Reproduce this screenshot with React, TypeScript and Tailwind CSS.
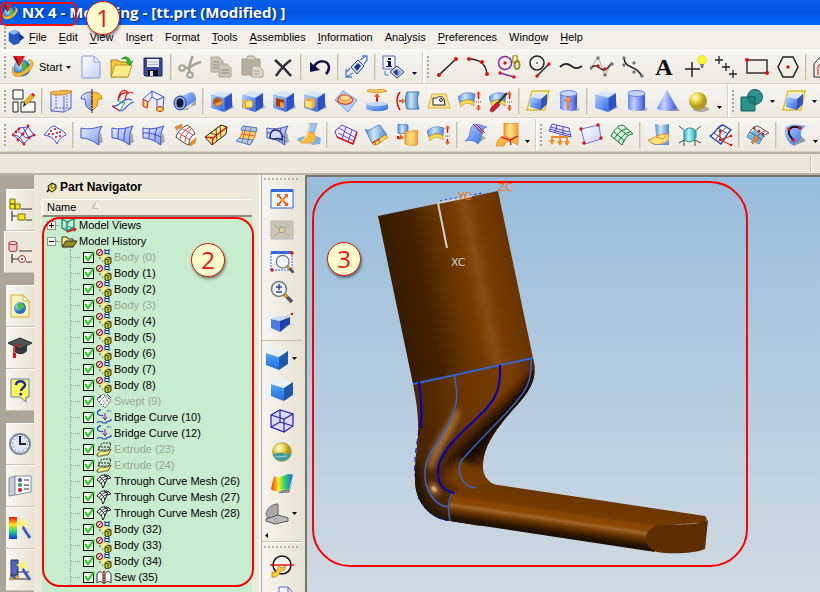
import type { ReactNode } from 'react';

const RED = '#e01010';

function Dots({ at, r = 1.7, fill = RED }: { at: number[][]; r?: number; fill?: string }) {
  return (
    <>
      {at.map(([x, y]) => (
        <circle key={`${x}-${y}`} cx={x} cy={y} r={r} fill={fill} />
      ))}
    </>
  );
}

function Cube() {
  return (
    <>
      <path d="M13 23 24 19 22 12z" fill="#b5b2a6" />
      <path d="M1 6 14 9v14L1 19z" fill="url(#blueFace)" />
      <path d="M1 6 9 2l13 2-8 5z" fill="#d6e6fc" />
      <path d="M14 9 22 4v14l-8 5z" fill="#2a52c4" />
      <path d="M1 6 14 9v14M14 9l8-5" fill="none" stroke="#7ba4f0" strokeWidth=".7" />
    </>
  );
}

function DatumCube() {
  return (
    <>
      <path d="M6 2h17l-4 19H1z" fill="#fdf3b8" stroke="#e2bb35" strokeWidth="1.500" />
      <path d="M4 8l11 2v11L4 18z" fill="url(#blueFace)" />
      <path d="M4 8l6-4 11 1-6 5z" fill="#d5e4fa" />
      <path d="M15 10l6-5v10l-6 6z" fill="#3555b8" />
    </>
  );
}

function Cylinder() {
  return (
    <>
      <path d="M6 22h15l2-3z" fill="#aaa" />
      <path d="M3 4v15c0 4 17 4 17 0V4z" fill="url(#blueRound)" />
      <ellipse cx="11.500" cy="4.500" rx="8.500" ry="3" fill="#c5d3ff" stroke="#6a7cf0" />
    </>
  );
}

function Thicken() {
  return (
    <>
      <path d="M0 8c6-5 11-5 17-3l-1 8C11 9 7 10 2 14z" fill="url(#steel)" stroke="#4775c8" strokeWidth=".7" />
      <path d="M2 14c5-4 9-4 14-1v4c-5-4-9-4-13 1z" fill="#ffe04a" stroke="#c98a1a" strokeWidth=".7" />
      <path d="M20.500 10V4m0 17v-5" stroke={RED} strokeWidth="1.500" />
      <path d="M18 5.500 20.500 2 23 5.500zM18 18.500l2.500 3.500 2.500-3.500z" fill="#f05a20" />
      <path d="M18 13h5" stroke="#a33" strokeDasharray="1 1" />
    </>
  );
}

function CurvedSheet({ lines, cross }: { lines?: boolean; cross?: boolean }) {
  return (
    <>
      <path d="M16 22 23 19l-2-10z" fill="#aaa9a0" />
      <path d="M1 5c7 2 15 0 21-2-3 5-4 11-3 19C13 18 7 15 1 15z" fill="url(#sheet)" stroke="#4554c8" />
      {lines && <path d="M8 5c-1 4-1 7-1 11M15 5c-2 5-2 9-2 13" fill="none" stroke="#4048e0" />}
      {cross && <path d="M1 10c7-1 13 2 18 4" fill="none" stroke="#4048e0" />}
    </>
  );
}

function Magnifier() {
  return (
    <>
      <path d="m14 14 8 8" stroke="#555" strokeWidth="3.500" />
      <path d="m14 14 3 3" stroke="#f0a020" strokeWidth="3" />
      <circle cx="9" cy="9" r="7.500" fill="#eef3ff" fillOpacity=".85" stroke="#777" strokeWidth="1.500" />
    </>
  );
}

const art: Record<string, ReactNode> = {
  nx: (
    <>
      <circle cx="11" cy="13" r="8.500" fill="url(#globe)" />
      <path d="M11 6c3 2 6 3 6 8 0 3-2 5-4 6-2-4-3-8-2-14z" fill="#49b649" />
      <path d="M2 12c-3 8 3 12 10 8 7-3 11-9 10-13-1-2-3-2-5-2 3 1 3 3 1 6-3 4-8 7-12 7-3 0-4-3-4-6z" fill="#f3bb2b" stroke="#b87c10" strokeWidth=".5" />
      <path d="M2 1h12L8 12z" fill="#dd2222" />
      <path d="M2 1l6 11-2-9z" fill="#881010" />
    </>
  ),
  'new file': (
    <>
      <path d="M3 1h12l6 6v16H3z" fill="url(#paper)" stroke="#8a9ad8" />
      <path d="M15 1v6h6z" fill="#fff" stroke="#8a9ad8" />
    </>
  ),
  open: (
    <>
      <path d="M1 5h7l2 2h8v15H1z" fill="#f0c838" stroke="#a8861a" />
      <path d="M1 22 5 10h17l-4 12z" fill="#fdeb86" stroke="#b8922a" />
      <path d="M11 4c4-4 9-2 10 3l2-1-3 5-4-4h2c-1-3-4-4-7-3z" fill="#2db82d" stroke="#168016" strokeWidth=".5" />
    </>
  ),
  save: (
    <>
      <path d="M3 3h18v18H4l-1-1z" fill="#3a4f9c" stroke="#18245c" />
      <path d="M6 4h12v8H6z" fill="#eef2fb" />
      <path d="M7 7h10M7 9.500h10" stroke="#a8b4d0" />
      <path d="M7 15h10v6H7z" fill="#111" />
      <path d="M9 16h3v5H9z" fill="#dde" />
    </>
  ),
  cut: (
    <g fill="none" stroke="#a5a294" strokeWidth="2">
      <circle cx="4" cy="13" r="2.800" />
      <circle cx="12" cy="20" r="2.800" />
      <path d="M7 13c5 1 9-5 16-6M11 17c1-5 0-10 4-16" strokeWidth="2.500" />
    </g>
  ),
  copy: (
    <g fill="#c9c6b8" stroke="#aaa795">
      <path d="M2 2h8l4 4v11H2z" />
      <path d="M10 9h8l4 4v9H10z" />
      <path d="M4 7h6M4 10h5M4 13h5M12 15h8M12 18h8" stroke="#8f8c7c" />
    </g>
  ),
  paste: (
    <g stroke="#a5a28f">
      <path d="M2 4h18v16H2z" fill="#b4b09c" />
      <path d="M8 1h6l2 4H6z" fill="#d4d1c4" />
      <path d="M12 11h7l4 4v7H12z" fill="#dad8cc" />
      <path d="M14 16h6M14 19h6" />
    </g>
  ),
  delete: <path d="M4 5c6 5 11 10 16 16M20 5C14 9 9 15 5 21" fill="none" stroke="#2c2c34" strokeWidth="2.500" />,
  undo: (
    <>
      <path d="M6 12C10 4 20 5 21 12c0 3-1 5-3 7" fill="none" stroke="#11114a" strokeWidth="2.500" />
      <path d="M2 7v10l10-2z" fill="#11114a" />
    </>
  ),
  repeat: (
    <>
      <path d="m6 12 7-7 6 6-7 8z" fill="#dfe8fb" stroke="#24348c" />
      <path d="m9 12 4-4 3 3-4 5z" fill="#24348c" />
      <path d="M15 5l6-4M17 1h5v5M19 9l3-4M1 14v8h6M1 22l7-4M5 13l-3 4" fill="none" stroke="#4b84d8" strokeWidth="1.300" />
    </>
  ),
  information: (
    <>
      <path d="M1 1h12v13H1z" fill="#f5f6ff" stroke="#5560c0" />
      <path d="M6 3h3v2H6zM5 6h4v5h1v1H4v-1h2V7H5z" fill="#111160" />
      <path d="m8 17 7-6 7 6-7 6z" fill="#dfe8fb" stroke="#24348c" />
      <path d="m11 17 4-3 4 3-4 4z" fill="#24348c" />
      <path d="m15 14 1 7 3-4z" fill="#7ba4e8" />
      <path d="M3 16v4h4" fill="none" stroke="#4b84d8" />
    </>
  ),
  line: (
    <>
      <path d="M4 20 21 4" stroke="#222" strokeWidth="1.500" />
      <Dots at={[[4, 20], [21, 4]]} r={2} />
    </>
  ),
  arc: (
    <>
      <path d="M3 4c10 0 17 5 18 15" fill="none" stroke="#222" strokeWidth="1.500" />
      <Dots at={[[3, 4], [16, 7], [21, 19]]} r={2} />
    </>
  ),
  'lines and arcs': (
    <>
      <circle cx="8" cy="8" r="6.500" fill="none" stroke="#8030b0" strokeWidth="1.500" />
      <path d="M3 18 17 22" stroke="#8030b0" strokeWidth="1.500" />
      <Dots at={[[8, 8], [3, 18], [17, 22]]} />
      <ellipse cx="18" cy="4" rx="2.500" ry="4" fill="none" stroke="#b4a624" strokeWidth="1.800" />
      <ellipse cx="20" cy="10" rx="2.500" ry="4" fill="none" stroke="#988b18" strokeWidth="1.800" />
    </>
  ),
  circle: (
    <>
      <circle cx="9" cy="8" r="7" fill="none" stroke="#222" strokeWidth="1.500" />
      <path d="m9 21 12-12" stroke="#222" strokeWidth="1.500" />
      <circle cx="9" cy="8" r=".8" />
      <Dots at={[[9, 21], [21, 9]]} />
    </>
  ),
  curve: <path d="M1 12c5-5 9-3 13 0 3 2 6 1 9-1" fill="none" stroke="#222" strokeWidth="1.800" />,
  spline: (
    <>
      <path d="M1 13 8 2l7 18 7-12" fill="none" stroke="#aaa" />
      <path d="M1 13c6-6 8 2 13 2 4 0 5-5 8-7" fill="none" stroke="#222" strokeWidth="1.300" />
      <Dots at={[[1, 13], [8, 3], [15, 20], [22, 9]]} fill="#777" />
      <Dots at={[[8, 11], [15, 14]]} />
    </>
  ),
  'fit spline': (
    <>
      <path d="M3 3c1 12 13 6 18 19" fill="none" stroke="#222" strokeWidth="1.500" />
      <Dots at={[[3, 3], [3, 10], [13, 8], [13, 17], [21, 21]]} fill="#777" />
    </>
  ),
  text: (
    <text x="12" y="20" textAnchor="middle" fontFamily="Liberation Serif, serif" fontWeight="bold" fontSize="24">
      A
    </text>
  ),
  point: (
    <>
      <path d="M9 7v15M2 14h15" stroke="#222" strokeWidth="1.500" />
      <circle cx="19" cy="5" r="4.500" fill="#fdf435" stroke="#d8cc20" strokeWidth=".5" />
      <path d="M17 9h4l-1 4h-2z" fill="#777" />
    </>
  ),
  'point set': <path d="M5 1v8M1 5h8M12 8v8M8 12h8M19 15v8M15 19h8" stroke="#222" strokeWidth="1.300" />,
  rectangle: (
    <>
      <path d="M2 5h20v13H2z" fill="none" stroke="#333" strokeWidth="1.500" />
      <Dots at={[[2, 5], [22, 18]]} r={2} />
    </>
  ),
  polygon: (
    <>
      <path d="M7 2h10l5 10-5 10H7L2 12z" fill="none" stroke="#222" strokeWidth="1.500" />
      <Dots at={[[12, 12]]} />
    </>
  ),
  offset: (
    <>
      <path d="M1 22V9l6-7 9 3v17z" fill="none" stroke="#222" />
      <path d="M5 20V11l5-5 6 3" fill="none" stroke={RED} />
    </>
  ),
  sketch: (
    <>
      <path d="M1 1h10v9H1zM1 13h5v10H1zM9 13h14v10H9z" fill="#fbfbf8" stroke="#222" />
      <path d="m12 13 2 3 8-8-3-3z" fill="#f0b420" stroke="#8c6410" strokeWidth=".5" />
      <path d="m11 18 1-5 2 3z" fill="#222" />
      <path d="m19 5 3 3 1-2-2-2z" fill={RED} />
    </>
  ),
  extrude: (
    <>
      <path d="M2 5v17l13 1V7M22 3v16l-7 4" fill="#e5e9ff" stroke="#5560e0" />
      <path d="M7 5v14M18 6v13M2 22l5-3h15" fill="none" stroke="#5560e0" strokeDasharray="2 1" />
      <path d="M1 4c5-3 6-1 10-2s8 0 12 0c-3 3-8 4-12 4S4 6 1 4z" fill="#f4bc58" stroke="#d08018" />
    </>
  ),
  revolve: (
    <>
      <path d="M12 3C5 3 1 6 1 10h4l1 7 4 4h2z" fill="url(#sheet)" stroke="#3a62d0" />
      <path d="M12 3c6 0 10 3 10 7h-4l-1 7-4 4h-1z" fill="#fbc02d" stroke="#d87f10" />
      <path d="M12 0v24" stroke="#222" strokeDasharray="6 1 2 1" />
    </>
  ),
  sweep: (
    <g fill="none">
      <path d="M7 12C8 1 14-1 17 4c-6-1-8 1-10 8zM14 11c1-7 4-9 8-7" stroke={RED} strokeWidth="1.200" />
      <path d="M1 17c8 2 11-10 20-6M1 17l8 5c6 0 7-8 14-9" stroke="#3a62d0" strokeWidth="1.200" />
      <path d="m7 12 7 2M9 22l5-9" stroke="#20b0a0" />
      <path d="M1 17l8 5" stroke={RED} />
    </g>
  ),
  'sweep along guide': (
    <>
      <path d="M1 10 10 2l12 6-1 11-6 1V11l-5-3-4 5" fill="#eef0ff" stroke="#4554e0" />
      <path d="M10 2v6M15 11l7-3" stroke="#4554e0" />
      <path d="M1 10l5 3-1 6-4-2z" fill="#ffd680" stroke={RED} />
      <ellipse cx="18" cy="20" rx="3.500" ry="2.500" fill="#ffe14a" stroke={RED} />
    </>
  ),
  tube: (
    <>
      <path d="M8 21 23 16V9l-8 12z" fill="#aaa89c" />
      <path d="M6 8 18 3c3 0 5 3 5 8L9 21z" fill="url(#blueFace)" />
      <ellipse cx="7" cy="14" rx="6" ry="7" fill="#95a8dc" stroke="#28408c" />
      <ellipse cx="7" cy="14" rx="3.500" ry="4.500" fill="#101838" />
    </>
  ),
  hole: (
    <>
      <Cube />
      <circle cx="7.500" cy="13" r="4.500" fill="#b3561a" />
      <path d="M4 15a4.500 4.500 0 0 0 8-3z" fill="#ff9c34" />
    </>
  ),
  boss: (
    <>
      <Cube />
      <path d="M2 11h6v8H2z" fill="#ffb435" />
      <circle cx="8" cy="15" r="4" fill="#ffe680" stroke="#e08c18" />
    </>
  ),
  pocket: (
    <>
      <Cube />
      <path d="M4 9l8 2v8l-8-2z" fill="#ff9a35" />
      <path d="M4 9l8 2v3l-4-1v5l-4-1z" fill="#a83c10" />
    </>
  ),
  pad: (
    <>
      <Cube />
      <path d="M2 11l7 1v8l-7-2z" fill="#ffe680" stroke="#d8881c" strokeWidth=".7" />
      <path d="M9 12l3-2v7l-3 3zM2 11l3-2 7 1-3 2z" fill="#ffab30" />
    </>
  ),
  emboss: (
    <>
      <path d="M1 11 9 2l14 9-9 12z" fill="#b6d3f6" stroke="#6c9fe0" />
      <path d="M4 13c-1-6 5-9 10-6 5 2 6 4 4 6-4 3-9 3-14 0z" fill="#ffc468" stroke={RED} />
      <ellipse cx="11" cy="9" rx="5" ry="2.500" fill="#ffe39a" stroke="#e88a20" />
    </>
  ),
  'offset emboss': (
    <>
      <path d="M2 2c4-3 6 0 10-1s7-1 10 1c-5 2-16 2-20 0z" fill="#ffd26e" stroke="#e0901c" />
      <path d="M12 14V6" stroke={RED} strokeWidth="2" />
      <path d="m9 8 3-4 3 4z" fill="#f05a20" />
      <path d="M1 15c6-3 16-3 22 0v5c-6 3-16 3-22 0z" fill="url(#blueFace)" />
      <path d="M1 15c6-3 16-3 22 0-6 3-16 3-22 0z" fill="#c5dbfa" />
    </>
  ),
  'face cut': (
    <>
      <path d="M4 3C0 8 0 15 4 21" fill="none" stroke={RED} strokeWidth="1.500" />
      <path d="M3 12h7" stroke={RED} strokeWidth="1.500" />
      <path d="m6 9 4 3-4 3z" fill="#f08020" />
      <path d="M11 3h12c-2 5-2 12 0 17H11c-2-5-2-12 0-17z" fill="url(#steel)" stroke="#3c7cae" />
    </>
  ),
  'user defined': (
    <>
      <path d="M5 5h14l4 14H1z" fill="#ffe793" stroke="#e0b030" />
      <path d="M6 16V9h4c1-2 6-2 7 1l1 6z" fill="#fff" stroke="#222" />
      <circle cx="14" cy="11" r="1.500" fill="none" stroke="#222" />
    </>
  ),
  thicken: <Thicken />,
  'sheets to solid': (
    <>
      <Thicken />
      <path d="M2 19 8 13l3 3-6 6c-3 2-5 0-3-3z" fill="#d41838" stroke="#80102c" strokeWidth=".6" />
      <path d="m9 14 9-10" stroke="#333" strokeWidth="2" />
    </>
  ),
  'datum plane': <DatumCube />,
  'datum axis': (
    <>
      <Cylinder />
      <path d="M10 20v-8H7l4-5 4 5h-3v8z" fill="#f29468" stroke="#b85420" strokeWidth=".6" />
    </>
  ),
  block: <Cube />,
  cylinder: <Cylinder />,
  cone: (
    <>
      <path d="M10 22h14l-8-9z" fill="#999" />
      <path d="M11 1 1 19c2 4 17 4 20 0z" fill="url(#blueRound)" />
    </>
  ),
  sphere: (
    <>
      <ellipse cx="14" cy="20" rx="8" ry="3" fill="#aaa89c" />
      <circle cx="11" cy="12" r="9" fill="url(#yellowBall)" />
    </>
  ),
  unite: (
    <>
      <circle cx="15" cy="8" r="7.500" fill="#2d9090" stroke="#106060" />
      <path d="M1 8h14v14H1z" fill="#2a8f8d" stroke="#106060" />
      <path d="M8 8a7.500 7.500 0 0 0 7 7.500V8z" fill="#208080" stroke="#106060" strokeWidth=".7" />
    </>
  ),
  'through points': (
    <>
      <path d="M1 12 7 5l9-1 6 8-5 3-5 6z" fill="#f4f5ff" stroke="#4048e0" />
      <path d="m6 8 8 7 8-3M1 12c5 0 8 3 11 9M6 17l10-13M11 4l6 11" fill="none" stroke="#4048e0" />
      <Dots at={[[1, 12], [7, 6], [16, 3], [22, 12], [17, 15], [12, 21], [6, 17], [11, 11], [4, 9]]} r={1.4} />
    </>
  ),
  'from point cloud': (
    <>
      <path d="M1 12C6 6 8 3 12 3c4 4 8 3 11 9-5 2-7 4-9 9C11 15 7 13 1 12z" fill="#f4f5ff" stroke="#4048e0" />
      <Dots at={[[8, 8], [12, 6], [10, 11], [14, 10], [17, 9], [13, 14], [6, 11], [17, 13]]} r={1.1} />
    </>
  ),
  ruled: <CurvedSheet />,
  'through curves': <CurvedSheet lines />,
  'through curve mesh': <CurvedSheet lines cross />,
  swept: (
    <>
      <path d="M3 14C5 8 9 5 14 2c5 3 7 6 8 9-5 2-6 6-6 11-4-1-8-4-13-8z" fill="#fff" stroke="#444" />
      <path d="m6 10 11 7M10 6l10 6M12 19c0-6 3-9 6-13M7 16c1-6 5-9 10-12" fill="none" stroke="#e04040" />
      <path d="M2 4 9 1v3L4 7 3 6zM17 20l6-5-1 5-5 3z" fill="#f0902c" stroke="#b85c14" strokeWidth=".5" />
    </>
  ),
  'section body': (
    <>
      <path d="M1 14 17 2l6 2-1 7L8 22z" fill="#fde97c" stroke="#222" />
      <path d="M1 14l8 1L23 4M9 15l-1 7" fill="none" stroke={RED} strokeWidth="1.500" />
      <path d="m12 6 1 12M16 3l1 11M6 10l7 2" stroke="#222" strokeWidth=".8" />
    </>
  ),
  'bridge sheet': (
    <>
      <path d="M8 3 22 5l-2 8-4 8-14-3 5-7z" fill="#ffd264" stroke="#e07820" />
      <path d="M8 3 22 5l-1 4L6 7zM4 15l14 2-3 5-14-4z" fill="#a9ccf4" stroke="#4480d0" />
      <path d="m11 4-4 15M16 5l-4 16M6 11l14 2" stroke="#e04020" strokeWidth=".8" />
    </>
  ),
  'n-sided surface': (
    <>
      <CurvedSheet lines cross />
      <path d="M4 15c0-4 1-8 5-8 5 0 8 3 7 10-4-4-8 1-12-2z" fill="#cdd9ff" stroke="#223060" strokeWidth="1.500" />
    </>
  ),
  transition: (
    <>
      <path d="M13 0h7l-3 10-6-1z" fill="#9dc4f4" stroke="#4b86d0" strokeWidth=".6" />
      <path d="M11 9l6 1c0 2 1 3 3 4l-3 6H4l-3-3c6 0 9-3 10-8z" fill="#fbb93a" stroke="#de8820" strokeWidth=".7" />
      <path d="M1 15l7-2-3 5H0zM19 13l5 2-1 6-8 1-1-2 3-1z" fill="#7fb0ea" />
      <path d="M13 1l-2 9c-1 4-3 6-6 7" fill="none" stroke="#ffe9a0" />
    </>
  ),
  'law extension': (
    <>
      <path d="M1 8 8 2l15 7-4 12L3 14z" fill="#f2f0ff" stroke="#5040d8" />
      <path d="m5 5 15 9M4 10l16 8M12 4l-4 12M18 7l-4 12" stroke="#6048e0" />
      <path d="m3 14 16 7 4-12" fill="none" stroke={RED} strokeWidth="1.500" />
    </>
  ),
  extension: (
    <>
      <path d="M0 6c5 4 8-3 15-4l7 10c-5 1-9 4-15 8z" fill="url(#steel)" stroke="#3a6cd0" strokeWidth=".8" />
      <path d="m7 20 14-8 2 3c-4 0-8 7-14 7z" fill="#ffe268" stroke="#e58b18" />
      <path d="m9 18 2 4M13 16l2 4M7 20l8-4" stroke={RED} strokeWidth=".8" />
    </>
  ),
  enlarge: (
    <>
      <path d="M2 1c4 2 7-1 10 1v9c-3-2-6 1-10-1z" fill="url(#steel)" stroke="#4480d0" strokeWidth=".8" />
      <path d="M9 8c4 2 9-2 13 0-2 4 1 10-1 14-4 0-8 1-12-1z" fill="url(#amber)" stroke="#e58b18" strokeWidth=".8" />
      <path d="M2 13v2h4" fill="none" stroke={RED} strokeWidth="2" />
      <path d="m4 11 4 4-5 2z" fill="#e85c18" />
    </>
  ),
  'offset surface': <Thicken />,
  trim: (
    <>
      <path d="M12 22 22 15l-5-3z" fill="#aaa89c" />
      <path d="M8 3c5-4 10 0 15 1-6 1-4 10-9 17-4-4-8-4-13-3 6-4 4-10 7-15z" fill="url(#blueFace)" stroke="#4480c8" strokeWidth=".7" />
      <path d="m9 1 10 10M12 1l9 9" stroke={RED} />
    </>
  ),
  'face blend': (
    <>
      <path d="M9 0h14v13l-5 3-9-3z" fill="url(#amber)" stroke="#e07818" strokeWidth=".7" />
      <path d="M1 23c1-5 4-9 8-10l7 4 7-4v9l-7-4c-4 0-6 1-7 5z" fill="#ffb83c" stroke="#e07818" strokeWidth=".7" />
      <path d="m6 14 9 3 8-4M15 17l1 5" fill="none" stroke={RED} strokeWidth="1.300" />
    </>
  ),
  'x-form': (
    <>
      <path d="M4 1l17 4 2 9L1 8z" fill="#f3f2ff" stroke="#5040d8" />
      <path d="M3 4l18 5M2 6l20 6M9 2 7 10M15 4l0 8" stroke="#5040d8" />
      <path d="M4 20v-6h15v6M12 12v9" fill="none" stroke="#f08c20" strokeWidth="1.800" />
      <path d="m1 17 3 5 3-5zM9 18l3 5 3-5zM16 18l3 5 3-5z" fill="#f08c20" />
    </>
  ),
  'i-form': (
    <>
      <path d="m2 6 18-4 2 14-16 5z" fill="url(#paper)" stroke="#7a70e8" />
      <Dots at={[[2, 6], [19, 2], [22, 15], [5, 20]]} />
    </>
  ),
  'match edge': (
    <>
      <path d="M1 13C4 7 8 2 13 2l10 9c-6 0-8 5-11 11z" fill="#d3f2d7" stroke="#187038" />
      <path d="m4 9 11 9M8 5l11 8M4 16C8 10 12 6 17 6M8 19c4-6 7-9 12-10" fill="none" stroke="#187038" />
    </>
  ),
  'styled blend': (
    <>
      <path d="M8 1c5 1 9 1 14 0v12H9z" fill="url(#steel)" />
      <path d="M1 17c6-1 7-6 21-6-1 6-2 8-6 9-5 3-10 2-15-3z" fill="#ffe27a" stroke="#f08820" />
      <path d="M1 18c5 3 9 4 14 3 3-1 6-2 7-5v6H8z" fill="#5f92e0" />
      <path d="M9 14l7 2 5-5" fill="none" stroke="#f08820" />
    </>
  ),
  'styled corner': (
    <>
      <path d="m1 3 6 5h10l6-5M6 23v-6M17 23v-6M1 20l5-3h11l6 3" fill="none" stroke="#444" />
      <path d="M6 8c4-4 8-4 12 0v6c-3 6-9 6-12 2z" fill="url(#teal)" stroke="#178c9c" />
    </>
  ),
  'styled sweep': (
    <>
      <path d="M1 13C6 11 8 3 14 2l8 5c-5 4-5 8-10 14z" fill="#f4f6ff" stroke="#2040c0" strokeWidth="1.300" />
      <path d="M5 10l10 7M9 5l10 6M7 16c4-5 6-9 11-12" fill="none" stroke="#555" />
      <path d="M11 8v9l11 5M11 17l11-4" fill="none" stroke={RED} />
      <Dots at={[[11, 17], [11, 8], [22, 22], [22, 13]]} r={1.3} />
    </>
  ),
  reflection: (
    <>
      <path d="M1 14C5 6 8 3 12 3l11 7c-5 1-7 5-10 11z" fill="#eef0f0" stroke="#555" />
      <path d="m1 14 7-7 9 6-4 8z" fill="#6dbce8" />
      <path d="m4 9 12 8M8 6l11 8M9 17c3-5 6-8 10-9" fill="none" stroke="#555" />
      <path d="m5 19 4-3-2-1 5-3v6l-2-1-3 4z" fill="#f28a30" stroke="#b84a10" strokeWidth=".5" />
      <Dots at={[[8, 5], [13, 8], [17, 11]]} r={1.3} />
    </>
  ),
  section: (
    <>
      <path d="M2 4c7-4 14-2 21-1-6 4-6 8-4 12l-8 8C3 19 1 11 2 4z" fill="url(#blueFace)" />
      <path d="m10 23 13-5-4-4z" fill="#999" />
      <path d="M17 5C7 1 1 9 11 17" fill="none" stroke="#111" strokeWidth="1.800" />
      <Dots at={[[17, 5], [6, 6], [10, 17]]} />
    </>
  ),
  fit: (
    <>
      <path d="M1 3h22v18H1z" fill="#f4f7ff" stroke="#3560c8" />
      <path d="M1 2h22v3H1z" fill="#3568d8" />
      <path d="m8 8 9 10M17 8 8 18" stroke="#d84410" strokeWidth="1.500" />
      <path d="M7 7h4l-4 4zM18 7v4l-4-4zM7 19v-4l4 4zM18 19h-4l4-4z" fill="#e86020" />
      <circle cx="12.500" cy="13" r="2" fill="#f8a020" />
    </>
  ),
  'fit selection': (
    <>
      <path d="M1 3h22v18H1z" fill="#c9c6b8" stroke="#b5b6bc" />
      <path d="m4 7 16 11M20 7 4 18" stroke="#b9a98f" />
      <circle cx="12" cy="12" r="3" fill="#d6cf9e" stroke="#a9a078" />
    </>
  ),
  zoom: (
    <>
      <path d="M1 3h21v18H1z" fill="#f4f7ff" stroke="#4060e0" strokeDasharray="2 1" />
      <path d="M1 2h21v3H1z" fill="#3568d8" />
      <g transform="translate(5 5) scale(.85)">
        <Magnifier />
      </g>
      <Dots at={[[2, 21], [22, 4]]} />
    </>
  ),
  'zoom in/out': (
    <>
      <Magnifier />
      <path d="M9 4v6M6 7h6M6 12h6" stroke="#3040a0" strokeWidth="1.500" />
    </>
  ),
  perspective: (
    <>
      <path d="m1 8 9 2v11l-9-4z" fill="#4c7ce8" />
      <path d="m1 8 8-3 11 1-10 4z" fill="#c8dcfa" />
      <path d="m10 10 10-4v7l-10 8z" fill="#2040b0" />
      <path d="m15 6 7-3M15 16l7-3" stroke="#999" strokeDasharray="1 1" />
      <Dots at={[[22, 3]]} r={1.2} />
    </>
  ),
  shaded: (
    <>
      <path d="M1 6 14 10v13L1 18z" fill="url(#shadeFace)" />
      <path d="M1 6 9 1l14 3-9 6z" fill="#e6f2ff" />
      <path d="M14 10 23 4v13l-9 6z" fill="#2058ac" />
    </>
  ),
  wireframe: (
    <g stroke="#2424a0" strokeWidth="1.200">
      <path d="M1 6 10 1l13 4v12l-9 6-13-5z" fill="#dcdcf8" />
      <path d="m1 6 13 4 9-5M14 10v13M10 1v12L1 18M10 13l13 4" fill="none" />
    </g>
  ),
  studio: (
    <>
      <circle cx="12" cy="12" r="9.500" fill="url(#yellowBall)" stroke="#8c8444" strokeWidth=".5" />
      <path d="M3 13c4 2 6-2 10 0s6 1 8-1c0 4-4 9-9 9s-8-3-9-8z" fill="#3f9ca0" />
      <path d="M5 16c4 2 7 0 12 0" fill="none" stroke="#a8dbe2" />
    </>
  ),
  'face analysis': (
    <>
      <path d="M8 21c4-1 8-4 11-2l4-9-4 12c-4-1-8 2-11-1z" fill="#888" />
      <path d="M4 5c6 5 12-5 19-1l-4 15c-6-3-11 5-18-1z" fill="url(#rainbow)" />
    </>
  ),
  clipping: (
    <>
      <path d="M1 12C2 6 7 2 13 2v11l-9 5z" fill="#a9a9a9" stroke="#666" />
      <path d="m1 17 12-4 10 3v3l-13 3-9-3z" fill="#bdbdbd" stroke="#555" />
      <circle cx="11" cy="18" r="1.500" fill="#eee" stroke="#555" strokeWidth=".6" />
    </>
  ),
  preferences: (
    <>
      <circle cx="12" cy="10" r="9" fill="#f5f4ee" stroke="#111" strokeWidth="1.500" />
      <path d="M0 10h24" stroke={RED} strokeWidth="1.500" />
      <path d="M2 17c3 2 5-1 6-4s-1-3 0-4l2 3 3 1 2-2c1 4-2 5-4 5-2 3-4 7-9 6z" fill="#ffc935" stroke="#a87810" strokeWidth=".7" />
    </>
  ),
  sheet: (
    <>
      <path d="M9 1h9l5 6v17H9z" fill="url(#paper)" stroke="#5c68c8" />
      <path d="M18 1v6h5" fill="none" stroke="#5c68c8" />
    </>
  ),
  'assembly navigator': (
    <>
      <path d="M2 1h5v5H2zM2 6h5v5H2zM7 6h5v5H7zM10 16h7v6h-7z" fill="#f8e820" stroke="#77700a" />
      <path d="M13 11h11M18 22h6M4 13v10M4 18h5" stroke="#334" strokeWidth="1.200" />
    </>
  ),
  'part navigator': (
    <>
      <path d="M1 3v7c0 2 8 2 8 0V3z" fill="#f5c6c6" stroke="#a02828" />
      <ellipse cx="5" cy="3" rx="4" ry="1.500" fill="#fff" stroke="#a02828" />
      <path d="M11 11h13M4 14v9M4 19h6M18 22h6" stroke="#334" strokeWidth="1.200" />
      <circle cx="14" cy="19" r="3.500" fill="#fff" stroke="#a02828" />
      <circle cx="14" cy="19" r="1" fill="#a02828" />
    </>
  ),
  browser: (
    <>
      <path d="M3 1h12l6 6v16H3z" fill="#fdf3b8" stroke="#d8a93a" />
      <path d="M15 1v6h6z" fill="#fff" stroke="#d8a93a" />
      <circle cx="12" cy="14" r="6" fill="url(#globe)" />
      <path d="M9 10c4-2 7 0 8 4-3-1-3 2-5 2s-3-3-3-6z" fill="#4fbc4f" />
    </>
  ),
  training: (
    <>
      <path d="M7 10v6c3 3 9 3 12-1V9z" fill="#333a3e" />
      <path d="m0 7 12-5 12 5-12 6z" fill="#4c5458" stroke="#22282c" />
      <path d="M12 8 6 12v7" fill="none" stroke={RED} strokeWidth="1.500" />
      <path d="M5 17h3v5H5z" fill={RED} />
    </>
  ),
  help: (
    <>
      <path d="M3 1h18v18h-3v5l-6-5H3z" fill="#fdf85a" stroke="#5a80c8" />
      <path d="M8 7c0-5 9-5 9 0 0 3-4 3-4 6" fill="none" stroke="#1828a0" strokeWidth="2.500" />
      <path d="M11.500 15H14v2.500h-2.500z" fill="#1828a0" />
    </>
  ),
  history: (
    <>
      <circle cx="12" cy="12" r="10" fill="#dbe7f3" stroke="#7a8894" strokeWidth="1.800" />
      <circle cx="12" cy="12" r="7.500" fill="none" stroke="#4c5c6c" strokeDasharray="1 3" />
      <path d="M12 4v8h6" fill="none" stroke="#222" strokeWidth="2" />
    </>
  ),
  palette: (
    <>
      <path d="m1 4 6-2v19l-6 1z" fill="#c8ccd4" stroke="#8a8e98" />
      <path d="M7 2h16v16L7 21z" fill="#f6f8ff" stroke="#8a8e98" />
      <Dots at={[[12, 6]]} r={2} fill="#3448c8" />
      <Dots at={[[12, 11]]} r={2} fill="#28a838" />
      <Dots at={[[12, 16]]} r={2} />
      <path d="M16 6h5M16 11h5M16 15h5" stroke="#333" />
    </>
  ),
  'color wizard': (
    <>
      <path d="M1 1h8v22H1z" fill="url(#rainbowDown)" />
      <path d="m14 10 8 12" stroke="#4858c8" strokeWidth="3" />
      <path d="m13 1 2 4 5-2-3 4 4 4-6-1-2 4-1-5-4-2 4-2z" fill="#fff37a" />
    </>
  ),
  'mesh wizard': (
    <>
      <path d="M3 2h7v18H3z" fill="#5064b8" stroke="#28367c" />
      <path d="M1 21h20M2 17h8M8 14h13" stroke="#333" />
      <path d="m14 10 8 12" stroke="#4858c8" strokeWidth="3" />
      <path d="m13 1 2 4 5-2-3 4 4 4-6-1-2 4-1-5-4-2 4-2z" fill="#fff37a" />
      <Dots at={[[4, 21], [9, 19]]} fill="#e8a028" />
    </>
  ),
};

// 16px glyphs in the history tree
const treeArt: Record<string, ReactNode> = {
  body: (
    <>
      <path d="M9 0v6M13 0v6M9 1.500h4M9 4.500h4M3 9h11M6 12h6" stroke="#1830a0" />
      <path d="M4 8 9 5l4 3v3l-5 2z" fill="#fff08a" stroke="#d8cc50" strokeWidth=".5" />
      <path d="m9 10 3-2 3 1v5l-3 2-3-1z" fill="#c8c828" stroke="#222" strokeWidth=".9" />
      <path d="m9 10 3 1v5M12 11l3-2" fill="none" stroke="#222" strokeWidth=".7" />
      <circle cx="3.500" cy="3.500" r="3" fill="#f0d8d8" stroke="#8c2020" strokeWidth="1.200" />
      <path d="m1.500 5.500 4-4" stroke="#8c2020" />
    </>
  ),
  swept: (
    <>
      <path d="M1 7 7 1l8 6-2 3-4 5z" fill="#fff" stroke="#444" strokeDasharray="1.500 1" />
      <path d="m4 4 7 8M8 2l5 8M3 9l6-6M7 12l6-7" stroke="#555" strokeDasharray="1 1" />
      <path d="M1 6 5 2M11 1l4 4" stroke="#2830c0" />
    </>
  ),
  bridge: (
    <>
      <path d="M5 1C2 0 0 5 3 6s3 1 4 0M10 14c2-4 5 0 5-4M1 14c1-2 5-2 6 0h4" fill="none" stroke="#2038c8" strokeWidth="1.200" />
      <path d="M9 4v7M7 8l2 3 2-3" fill="none" stroke="#902090" />
      <path d="M11 2h4" stroke="#2038c8" strokeDasharray="2 1" />
    </>
  ),
  extrude: (
    <>
      <path d="M2 9 6 2h9l-2 7z" fill="none" stroke="#222" strokeDasharray="2 1" />
      <path d="M1 13c3-1 3-4 6-3s4 0 8-2l-3 6c-3-1-6 2-11 1z" fill="#f4ee70" stroke="#333" strokeWidth=".8" />
      <path d="M2 6h12" stroke="#222" strokeDasharray="2 1" />
    </>
  ),
  mesh: (
    <>
      <path d="M1 7C5 1 10 0 15 5l-4 1-4 9c-1-4-3-6-6-8z" fill="#fff" stroke="#222" />
      <path d="M4 4c3 2 4 4 5 7M8 2c3 1 4 3 4 4M3 9c3-5 6-6 10-6M5 11c2-4 4-5 7-6" fill="none" stroke="#222" />
    </>
  ),
  sew: (
    <>
      <path d="M1 14V5c1-3 5-3 6 0v9c-2-2-4-2-6 0zM9 14V5c1-3 5-3 6 0v9c-2-2-4-2-6 0z" fill="#fff" stroke="#333" />
      <path d="M8 2v13" stroke="#d02020" strokeWidth="2" strokeDasharray="2 1" />
    </>
  ),
  views: (
    <>
      <path d="M1 2l5 3v9l-5-3zM6 5l7-3v8l-7 4" fill="none" stroke="#108868" strokeWidth="1.300" />
      <path d="m3 13 5-8M6 9l6 2" stroke="#20a0a0" />
      <path d="m6 15 8-3" stroke={RED} strokeWidth="1.500" />
      <path d="m12 10 4 2-3 3z" fill={RED} />
    </>
  ),
  folder: (
    <>
      <path d="M1 13V4h5l1 2h5v3" fill="#f4f080" stroke="#333" />
      <path d="M1 14 5 8h11l-4 6z" fill="#98921c" stroke="#222" />
    </>
  ),
};

function Defs() {
  return (
    <svg className="absolute size-0" aria-hidden="true">
      <defs>
        <linearGradient id="blueFace" x1="0" y1="0" x2="1" y2="1">
          <stop offset="0" stopColor="#b4d2ff" />
          <stop offset="1" stopColor="#2c64e0" />
        </linearGradient>
        <linearGradient id="shadeFace" x1="0" y1="0" x2="0" y2="1">
          <stop offset="0" stopColor="#54a4f8" />
          <stop offset="1" stopColor="#1c6cdc" />
        </linearGradient>
        <linearGradient id="blueRound">
          <stop offset="0" stopColor="#6a86f4" />
          <stop offset=".35" stopColor="#c4d2ff" />
          <stop offset="1" stopColor="#3450e0" />
        </linearGradient>
        <linearGradient id="sheet" x1="0" y1="0" x2="1" y2="1">
          <stop offset="0" stopColor="#eef2ff" />
          <stop offset="1" stopColor="#7592ea" />
        </linearGradient>
        <linearGradient id="paper" x1="0" y1="0" x2="1" y2="1">
          <stop offset="0" stopColor="#ffffff" />
          <stop offset="1" stopColor="#c6d0f4" />
        </linearGradient>
        <linearGradient id="steel">
          <stop offset="0" stopColor="#4a90dc" />
          <stop offset=".4" stopColor="#cfe6fa" />
          <stop offset="1" stopColor="#4a86cc" />
        </linearGradient>
        <linearGradient id="amber">
          <stop offset="0" stopColor="#fb9a24" />
          <stop offset=".4" stopColor="#ffe890" />
          <stop offset="1" stopColor="#fb9a30" />
        </linearGradient>
        <linearGradient id="teal">
          <stop offset="0" stopColor="#2cb4c4" />
          <stop offset=".4" stopColor="#b8f4f4" />
          <stop offset="1" stopColor="#2ca4bc" />
        </linearGradient>
        <linearGradient id="rainbow">
          <stop offset="0" stopColor="#f03010" />
          <stop offset=".35" stopColor="#fff020" />
          <stop offset=".6" stopColor="#30d860" />
          <stop offset="1" stopColor="#2060f0" />
        </linearGradient>
        <linearGradient id="rainbowDown" x2="0" y2="1">
          <stop offset="0" stopColor="#f01010" />
          <stop offset=".35" stopColor="#ffe010" />
          <stop offset=".65" stopColor="#20d880" />
          <stop offset="1" stopColor="#1030f0" />
        </linearGradient>
        <radialGradient id="globe" cx=".35" cy=".35">
          <stop offset="0" stopColor="#c8f0ff" />
          <stop offset="1" stopColor="#1c70cc" />
        </radialGradient>
        <radialGradient id="yellowBall" cx=".35" cy=".3">
          <stop offset="0" stopColor="#fffde0" />
          <stop offset=".5" stopColor="#ecd94c" />
          <stop offset="1" stopColor="#b09a20" />
        </radialGradient>
      </defs>
    </svg>
  );
}

function Icon({ name }: { name: string }) {
  return (
    <svg viewBox="0 0 24 24" className="size-6 shrink-0" aria-hidden="true">
      {art[name]}
    </svg>
  );
}

function ToolButton({ name }: { name: string }) {
  return (
    <button aria-label={name} className="flex h-full w-[31px] shrink-0 items-center justify-center">
      <Icon name={name} />
    </button>
  );
}

function Grip() {
  return <div className="mx-[2px] h-[22px] w-[2px] shrink-0 bg-[repeating-linear-gradient(#aaa79a_0_2px,transparent_2px_4px)]" />;
}

function DropArrow({ low }: { low?: boolean }) {
  return (
    <button aria-label="More" className={`flex h-full w-[11px] shrink-0 justify-center ${low ? 'items-end pb-2' : 'items-center'}`}>
      <svg viewBox="0 0 5 3" className="h-[3px] w-[5px]">
        <path d="M0 0h5L2.500 3z" />
      </svg>
    </button>
  );
}

// '|' separator, 'v' drop-down arrow, '.' low drop-down arrow, '>' end of one toolbar and grip of the next
const toolbars: string[][] = [
  [
    'new file', 'open', 'save', '|', 'cut', 'copy', 'paste', 'delete', '|', 'undo', '|', 'repeat', '|', 'information', '>',
    'line', 'arc', 'lines and arcs', 'circle', 'curve', 'spline', 'fit spline', 'text', 'point', 'point set', 'rectangle',
    'polygon', '|', 'offset',
  ],
  [
    'sketch', '|', 'extrude', 'revolve', 'sweep', 'sweep along guide', 'tube', '|', 'hole', 'boss', 'pocket', 'pad',
    'emboss', 'offset emboss', 'face cut', 'user defined', 'thicken', 'sheets to solid', '|', 'datum plane', 'datum axis',
    '|', 'block', 'cylinder', 'cone', 'sphere', '>', 'unite', 'v', 'datum plane', 'v',
  ],
  [
    'through points', 'from point cloud', '|', 'ruled', 'through curves', 'through curve mesh', 'swept', 'section body',
    'bridge sheet', 'n-sided surface', 'transition', '|', 'law extension', 'extension', 'enlarge', 'offset surface', '|',
    'trim', 'face blend', '>', 'x-form', 'i-form', 'match edge', '|', 'styled blend', 'styled corner', 'styled sweep',
    '|', 'reflection', '|', 'section', '.',
  ],
];

function Toolbar({ items, children }: { items: string[]; children?: ReactNode }) {
  return (
    <div className="flex h-[34px] items-center overflow-hidden border-t border-t-white border-b border-b-[#d6d2c2] bg-linear-to-b from-[#f5f4ef] to-[#ece9df] pl-[2px]">
      <Grip />
      {children}
      {items.map((item, i) => {
        if (item === '|') return <div key={i} className="mx-[2px] h-[26px] w-[2px] shrink-0 border-l border-[#c5c1ac] bg-[#e0ddcd]" />;
        if (item === 'v') return <DropArrow key={i} />;
        if (item === '.') return <DropArrow key={i} low />;
        if (item === '>') {
          return (
            <div key={i} className="flex h-full shrink-0 items-center">
              <DropArrow low />
              <div className="ml-[2px] h-full w-[3px] border-l border-[#d6d2c2] bg-white" />
              <Grip />
            </div>
          );
        }
        return <ToolButton key={i} name={item} />;
      })}
    </div>
  );
}

const menus = [
  ['', 'F', 'ile'],
  ['', 'E', 'dit'],
  ['', 'V', 'iew'],
  ['In', 's', 'ert'],
  ['Fo', 'r', 'mat'],
  ['', 'T', 'ools'],
  ['', 'A', 'ssemblies'],
  ['', 'I', 'nformation'],
  ['Ana', 'l', 'ysis'],
  ['', 'P', 'references'],
  ['Wind', 'o', 'w'],
  ['', 'H', 'elp'],
];

interface Feature {
  name: string;
  icon: string;
  muted?: boolean;
}

const features: Feature[] = [
  { name: 'Body (0)', icon: 'body', muted: true },
  { name: 'Body (1)', icon: 'body' },
  { name: 'Body (2)', icon: 'body' },
  { name: 'Body (3)', icon: 'body', muted: true },
  { name: 'Body (4)', icon: 'body' },
  { name: 'Body (5)', icon: 'body' },
  { name: 'Body (6)', icon: 'body' },
  { name: 'Body (7)', icon: 'body' },
  { name: 'Body (8)', icon: 'body' },
  { name: 'Swept (9)', icon: 'swept', muted: true },
  { name: 'Bridge Curve (10)', icon: 'bridge' },
  { name: 'Bridge Curve (12)', icon: 'bridge' },
  { name: 'Extrude (23)', icon: 'extrude', muted: true },
  { name: 'Extrude (24)', icon: 'extrude', muted: true },
  { name: 'Through Curve Mesh (26)', icon: 'mesh' },
  { name: 'Through Curve Mesh (27)', icon: 'mesh' },
  { name: 'Through Curve Mesh (28)', icon: 'mesh' },
  { name: 'Body (32)', icon: 'body' },
  { name: 'Body (33)', icon: 'body' },
  { name: 'Body (34)', icon: 'body' },
  { name: 'Sew (35)', icon: 'sew' },
];

function TreeIcon({ name }: { name: string }) {
  return (
    <svg viewBox="0 0 16 16" className="size-4 shrink-0" aria-hidden="true">
      {treeArt[name]}
    </svg>
  );
}

function Branch({ label, icon, open }: { label: string; icon: string; open?: boolean }) {
  return (
    <div className="flex h-4 items-center pl-[5px]">
      <button aria-label={`Toggle ${label}`} className="flex size-[9px] items-center justify-center border border-[#8a9a8a] bg-[#f2f7ee]">
        <svg viewBox="0 0 5 5" className="size-[5px]">
          <path d={open ? 'M0 2h5v1H0z' : 'M0 2h2V0h1v2h2v1H3v2H2V3H0z'} />
        </svg>
      </button>
      <span className="mr-px w-[4px] border-t border-dotted border-[#8a9a8a]" />
      <TreeIcon name={icon} />
      <span className="ml-[2px]">{label}</span>
    </div>
  );
}

function FeatureRow({ name, icon, muted }: Feature) {
  return (
    <label className="flex h-4 items-center">
      <span className="mr-[3px] w-[9px] border-t border-dotted border-[#8a9a8a]" />
      <span className="relative size-[11px]">
        <input type="checkbox" defaultChecked className="peer block size-[11px] appearance-none border border-black bg-white" />
        <svg viewBox="0 0 12 11" className="absolute bottom-px left-0 hidden h-[11px] w-3 peer-checked:block">
          <path d="m2 5 3 4 6-8" fill="none" stroke="#10d010" strokeWidth="2" />
        </svg>
      </span>
      <span className="ml-[2px]">
        <TreeIcon name={icon} />
      </span>
      <span className={`ml-[2px] whitespace-nowrap ${muted ? 'text-[#9aa69b]' : ''}`}>{name}</span>
    </label>
  );
}

function ResourceTab({ name, selected }: { name: string; selected?: boolean }) {
  return (
    <button
      aria-label={name}
      className={`flex h-[42px] shrink-0 items-center justify-center border-t border-b border-t-white border-b-[#c8c4b2] ${
        selected ? '-ml-[2px] border-l border-l-white bg-[#ece9d8]' : 'bg-linear-to-r from-[#f7f6f1] to-[#e8e4d4]'
      }`}
    >
      <Icon name={name} />
    </button>
  );
}

function ResourceBar() {
  return (
    <div className="flex w-[34px] shrink-0 flex-col bg-[#aaa798] pt-[14px] pl-[6px]">
      <ResourceTab name="assembly navigator" />
      <ResourceTab name="part navigator" selected />
      <div className="mt-3 flex flex-col">
        <ResourceTab name="browser" />
        <ResourceTab name="training" />
        <ResourceTab name="help" />
      </div>
      <div className="mt-3 flex flex-col">
        <ResourceTab name="history" />
        <ResourceTab name="palette" />
        <ResourceTab name="color wizard" />
        <ResourceTab name="mesh wizard" />
      </div>
    </div>
  );
}

function PartNavigator() {
  return (
    <section className="flex w-[227px] shrink-0 flex-col border-r-2 border-white bg-[#ece9d8] pr-[7px] pl-2">
      <h2 className="flex h-[25px] items-center gap-[3px] border-b border-white pl-1 text-[12px] font-bold">
        <svg viewBox="0 0 11 11" className="size-[11px]" aria-hidden="true">
          <path d="m1 10 3-4" stroke="#111" strokeWidth="1.500" />
          <path d="M2 4 6 1l4 2v4L6 10 3 8z" fill="#e8d430" stroke="#111" />
          <circle cx="7" cy="4" r="2" fill="#fff8b0" stroke="#111" strokeWidth=".7" />
        </svg>
        Part Navigator
      </h2>
      <div className="flex h-[17px] items-center border-b-2 border-l border-b-[#8d8b7d] border-l-white pl-1">
        Name
        <svg viewBox="0 0 8 7" className="mb-1 ml-4 h-[7px] w-2" aria-hidden="true">
          <path d="M4 0 0 7h8" fill="none" stroke="#aca899" />
          <path d="M4 0l4 7" stroke="#fff" />
        </svg>
      </div>
      <div className="relative flex-1 bg-[#c8ecce]">
        <Branch label="Model Views" icon="views" />
        <Branch label="Model History" icon="folder" open />
        <div className="ml-7 border-l border-dotted border-[#8a9a8a]">
          {features.map((f) => (
            <FeatureRow key={f.name} {...f} />
          ))}
        </div>
        <div className="pointer-events-none absolute inset-x-0 top-0 -mr-[2px] h-[370px] rounded-[18px] border-2 border-[#ff0000]" />
        <Callout n={2} className="top-[26px] left-[149px]" />
      </div>
    </section>
  );
}

function SideGrip() {
  return <div className="my-[3px] h-[2px] w-[36px] shrink-0 bg-[repeating-linear-gradient(90deg,#b8b5a6_0_2px,transparent_2px_4px)]" />;
}

function SideButton({ name, menu }: { name: string; menu?: boolean }) {
  return (
    <div className="flex h-[31px] w-full shrink-0 items-center justify-center">
      <button aria-label={name}>
        <Icon name={name} />
      </button>
      {menu && <DropArrow />}
    </div>
  );
}

function ViewToolbar() {
  return (
    <div className="flex w-[44px] shrink-0 flex-col items-center overflow-hidden border-l border-[#aca899] bg-linear-to-r from-[#f6f5f0] to-[#e6e2d2] pr-[3px]">
      <SideGrip />
      <SideButton name="fit" />
      <SideButton name="fit selection" />
      <SideButton name="zoom" />
      <SideButton name="zoom in/out" />
      <SideButton name="perspective" />
      <div className="my-[2px] h-px w-full shrink-0 bg-[#c5c1ae]" />
      <SideButton name="shaded" menu />
      <SideButton name="shaded" />
      <SideButton name="wireframe" />
      <SideButton name="studio" />
      <SideButton name="face analysis" />
      <SideButton name="clipping" menu />
      <button aria-label="More views" className="flex h-3 w-full shrink-0 items-center pl-[3px]">
        <svg viewBox="0 0 3 5" className="h-[5px] w-[3px]">
          <path d="M3 0v5L0 2.500z" />
        </svg>
      </button>
      <div className="h-[2px] w-full shrink-0 border-t border-[#c5c1ae] bg-white" />
      <SideGrip />
      <SideButton name="preferences" />
      <SideButton name="sheet" />
    </div>
  );
}

function Callout({ n, className }: { n: number; className: string }) {
  return (
    <div
      className={`absolute flex size-[34px] items-center justify-center rounded-full border border-[#e01010] bg-[#ffffcc] font-['Open_Sans',sans-serif] text-[24px] leading-none text-[#f01010] shadow-[1px_2px_3px_rgba(0,0,0,0.45)] ${className}`}
    >
      {n}
    </div>
  );
}

const ELBOW =
  'M413 384C417 404 420 424 417 446C415 462 414 478 416 490C420 508 434 520 451 521L480 526L520 489L498 486C488 483 482 476 483 464C484 446 494 433 504 420C516 405 530 394 534 377C535 370 535 364 533 358Z';

function Part() {
  return (
    <svg viewBox="307 177 513 415" className="absolute top-0 left-0 h-[415px] w-[513px]" role="img" aria-label="Part model">
      <defs>
        <linearGradient id="barrel" gradientUnits="userSpaceOnUse" x1="378" y1="216" x2="498" y2="191">
          <stop offset="0" stopColor="#371b00" />
          <stop offset=".25" stopColor="#432100" />
          <stop offset=".42" stopColor="#603000" />
          <stop offset=".6" stopColor="#763a00" />
          <stop offset=".71" stopColor="#874a14" />
          <stop offset=".8" stopColor="#783b02" />
          <stop offset="1" stopColor="#683300" />
        </linearGradient>
        <linearGradient id="bar" gradientUnits="userSpaceOnUse" x1="500" y1="486" x2="494" y2="527">
          <stop offset="0" stopColor="#6c3600" />
          <stop offset=".38" stopColor="#743a00" />
          <stop offset=".44" stopColor="#8a4500" />
          <stop offset=".54" stopColor="#8a4800" />
          <stop offset=".62" stopColor="#a0632a" />
          <stop offset=".74" stopColor="#6c3600" />
          <stop offset=".9" stopColor="#2c1600" />
          <stop offset="1" stopColor="#1c0e00" />
        </linearGradient>
        <linearGradient id="elbow" gradientUnits="userSpaceOnUse" x1="413" y1="384" x2="533" y2="358">
          <stop offset="0" stopColor="#4a2500" />
          <stop offset=".4" stopColor="#6c3600" />
          <stop offset=".8" stopColor="#7a3d04" />
          <stop offset="1" stopColor="#5a2c00" />
        </linearGradient>
        <filter id="soft" x="-40%" y="-40%" width="180%" height="180%">
          <feGaussianBlur stdDeviation="5" />
        </filter>
        <filter id="softer" x="-40%" y="-40%" width="180%" height="180%">
          <feGaussianBlur stdDeviation="3" />
        </filter>
        <clipPath id="elbowClip">
          <path d={ELBOW} />
        </clipPath>
      </defs>
      <path d="M378 216 498 191 533 358 413 384z" fill="url(#barrel)" />
      <path d={ELBOW} fill="url(#elbow)" />
      <g clipPath="url(#elbowClip)" fill="none" strokeLinecap="round">
        <path d="M535 388C510 415 480 440 462 462" stroke="#1c0d00" strokeWidth="24" filter="url(#soft)" />
        <path d="M538 372C532 398 500 420 486 450" stroke="#231100" strokeWidth="9" filter="url(#softer)" />
        <path d="M447 447C434 462 430 478 434 494" stroke="#4a2500" strokeWidth="10" filter="url(#softer)" />
        <path d="M457 412C452 428 438 444 431 466" stroke="#b07840" strokeWidth="6" filter="url(#softer)" />
        <path d="M450 425C444 436 436 446 432 456" stroke="#c08a58" strokeWidth="2" filter="url(#softer)" />
        <path d="M460 462L505 485L480 500L448 478z" fill="#743a00" stroke="#743a00" strokeWidth="6" filter="url(#softer)" />
        <path d="M414 470C414 500 430 520 455 524" stroke="#241200" strokeWidth="13" filter="url(#softer)" />
        <ellipse cx="434" cy="489" rx="3" ry="6" fill="#f0b880" transform="rotate(-35 434 489)" filter="url(#softer)" />
        <ellipse cx="434" cy="489" rx="2" ry="3" fill="#d8a070" transform="rotate(-35 434 489)" />
      </g>
      <path d="M453 492C470 484 485 483 498 485L705 516Q709 520 704 523L660 525 650 530 647 540 655 552 450 521 449 506z" fill="url(#bar)" />
      <path d="M658 525C670 523 697 527 708 520L705 549C694 554 668 554 657 552C642 548 642 529 658 525z" fill="#5b2d00" />
      <g fill="none" stroke="#3366cc" strokeWidth="1.500">
        <path d="M413 384 533 358" strokeWidth="2" />
        <path d="M454 374C458 394 458 402 451 419C443 436 425 456 425 472C424 490 434 505 448 507" />
        <path d="M531 359C532 380 527 389 516 402C498 423 476 443 462 460C455 471 462 487 476 488" />
        <path d="M453 493C447 500 448 510 450 521" />
      </g>
      <g fill="none" stroke="#0000c4" strokeWidth="2">
        <path d="M419 382C422 400 422 421 420 428" />
        <path d="M419 430C416 447 414 462 415 476" strokeDasharray="5 4" strokeWidth="1" />
        <path d="M500 365C501 390 496 400 478 417C459 435 438 453 438 471C438 484 442 490 454 493" />
        <path d="M418 497C425 511 435 519 450 521" strokeDasharray="3 3" strokeWidth="1" />
        <path d="M440 201 482 193" stroke="#0000ff" strokeWidth="1" strokeDasharray="2 3" />
      </g>
      <path d="M472 196 438 203 447 248" fill="none" stroke="#d0d0d0" strokeWidth="2" />
      <g fontFamily="DejaVu Sans, sans-serif" fontSize="11">
        <text x="451" y="266" fill="#cfcfcf">
          XC
        </text>
        <text x="458" y="200" fill="#ff7010">
          YC
        </text>
        <text x="498" y="191" fill="#ff7010">
          ZC
        </text>
      </g>
    </svg>
  );
}

export default function App() {
  return (
    <div className="flex h-screen flex-col overflow-hidden bg-[#ece9d8] font-['Liberation_Sans',Arial,sans-serif] text-[11px] leading-none text-black">
      <Defs />
      <header className="relative flex h-[25px] shrink-0 items-center gap-[3px] bg-linear-to-b from-[#0a5fe8] via-[#0054e3] to-[#0468fb] pl-[2px] text-white">
        <svg viewBox="0 0 24 24" className="size-[17px]" aria-hidden="true">
          {art.nx}
        </svg>
        <h1 className="font-['Open_Sans',sans-serif] text-[15px] font-bold whitespace-pre text-shadow-[1px_1px_1px_#062a80]">
          NX 4 - Modeling - [tt.prt (Modified) ]
        </h1>
        <div className="pointer-events-none absolute top-[2px] left-0 z-10 h-6 w-[77px] rounded-md border-2 border-[#f01010]" />
        <Callout n={1} className="top-[1px] left-[86px] z-20" />
      </header>
      <nav className="flex h-[25px] shrink-0 items-center gap-3 bg-[#f1efe8] pl-[2px]">
        <div className="-mr-3 flex w-[27px] items-center">
          <Grip />
          <svg viewBox="0 0 24 24" className="size-[17px]" aria-hidden="true">
            <path d="M1 5 9 1l7 3 1 3 6 5-6 5-1 3-8 3-7-6z" fill="#2458c0" />
            <path d="M1 5 9 1l7 3-8 4z" fill="#8cb8f0" />
            <path d="M16 7l7 5-7 5z" fill="#123c94" />
          </svg>
        </div>
        {menus.map(([before, key, after]) => (
          <button key={before + key + after}>
            {before}
            <u className="underline-offset-2">{key}</u>
            {after}
          </button>
        ))}
      </nav>
      <div className="shrink-0 border-b-2 border-[#b5b1a0]">
        <Toolbar items={toolbars[0]}>
          <button className="flex w-[67px] shrink-0 items-center pl-[3px]">
            <Icon name="nx" />
            <span className="ml-[4px]">Start</span>
            <svg viewBox="0 0 5 3" className="ml-[4px] h-[3px] w-[5px]">
              <path d="M0 0h5L2.500 3z" />
            </svg>
          </button>
        </Toolbar>
        <Toolbar items={toolbars[1]} />
        <Toolbar items={toolbars[2]} />
      </div>
      <div className="flex h-[21px] shrink-0 justify-end border-b-2 border-[#b9b5a4] bg-[#ece9d8] py-px pr-2">
        <div className="w-[2px] border-l border-[#c5c1ae] bg-white" />
      </div>
      <main className="flex min-h-0 flex-1">
        <ResourceBar />
        <PartNavigator />
        <ViewToolbar />
        <section className="relative min-w-0 flex-1 overflow-hidden border-t-2 border-l-2 border-[#77756a] bg-linear-to-b from-[#97bddc] to-[#d0dae2]">
          <Part />
          <div className="pointer-events-none absolute top-[4px] left-[5px] h-[386px] w-[436px] rounded-[38px] border-2 border-[#ff0000]" />
          <Callout n={3} className="top-[65px] left-[20px]" />
        </section>
      </main>
    </div>
  );
}
